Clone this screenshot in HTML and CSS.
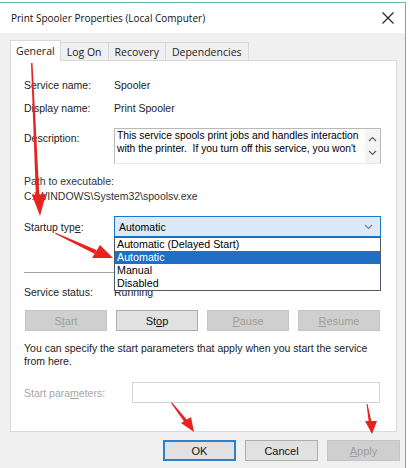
FILE: index.html
```html
<!DOCTYPE html>
<html lang="en">
<head>
<meta charset="UTF-8">
<meta name="viewport" content="width=device-width, initial-scale=1.0">
<title>Print Spooler Properties (Local Computer)</title>
<link rel="stylesheet" href="styles.css">
</head>
<body>
<div class="window">
    <div class="titlebar">
        <span class="title">Print Spooler Properties (Local Computer)</span>
        <svg class="close" width="12" height="12" viewBox="0 0 12 12">
            <path d="M0.5 0.5 L11.5 11.5 M11.5 0.5 L0.5 11.5" stroke="#222" stroke-width="1.1" fill="none"/>
        </svg>
    </div>
    <div class="main">
        <div class="tabs">
            <div class="tab active">General</div>
            <div class="tab">Log On</div>
            <div class="tab">Recovery</div>
            <div class="tab">Dependencies</div>
        </div>
        <div class="panel">
            <div class="row">
                <span class="label">Service name:</span>
                <span class="value">Spooler</span>
            </div>
            <div class="row display-row">
                <span class="label">Display name:</span>
                <span class="value">Print Spooler</span>
            </div>
            <div class="row desc-row">
                <span class="label desc-label">Description:</span>
                <div class="desc-box">
                    <div class="desc-text">This service spools print jobs and handles interaction with the printer.&nbsp; If you turn off this service, you won't be able to print or see your printers.</div>
                    <div class="scroll">
                        <svg width="9" height="6" viewBox="0 0 9 6"><path d="M1 5 L4.5 1.5 L8 5" stroke="#606060" stroke-width="1.2" fill="none"/></svg>
                        <svg width="9" height="6" viewBox="0 0 9 6"><path d="M1 1 L4.5 4.5 L8 1" stroke="#606060" stroke-width="1.2" fill="none"/></svg>
                    </div>
                </div>
            </div>
            <div class="path-label">Path to executable:</div>
            <div class="path-value">C:\WINDOWS\System32\spoolsv.exe</div>
            <div class="row startup-row">
                <span class="label">Startup typ<u>e</u>:</span>
                <div class="select">
                    <span>Automatic</span>
                    <svg width="9" height="6" viewBox="0 0 9 6"><path d="M1 1 L4.5 4.5 L8 1" stroke="#7a7a7a" stroke-width="1.1" fill="none"/></svg>
                    <ul class="options">
                        <li>Automatic (Delayed Start)</li>
                        <li class="selected">Automatic</li>
                        <li>Manual</li>
                        <li>Disabled</li>
                    </ul>
                </div>
            </div>
            <div class="separator"></div>
            <div class="row status-row">
                <span class="label">Service status:</span>
                <span class="value">Running</span>
            </div>
            <div class="service-buttons">
                <button class="btn" disabled>S<u>t</u>art</button>
                <button class="btn">St<u>o</u>p</button>
                <button class="btn" disabled><u>P</u>ause</button>
                <button class="btn" disabled><u>R</u>esume</button>
            </div>
            <p class="hint">You can specify the start parameters that apply when you start the service from here.</p>
            <div class="row params-row">
                <span class="label params-label">Start para<u>m</u>eters:</span>
                <div class="params-input"></div>
            </div>
        </div>
        <div class="actions">
            <button class="btn default">OK</button>
            <button class="btn">Cancel</button>
            <button class="btn" disabled><u>A</u>pply</button>
        </div>
    </div>
</div>

<!-- annotation arrows -->
<svg class="marks" width="410" height="468" viewBox="0 0 410 468">
    <g fill="#e8231f">
        <polygon points="31,63 32.5,63 39.5,199 36,199"/>
        <polygon points="32,195 46,194 40,216"/>
        <polygon points="55,232.5 55.6,234 95,254 96.5,250"/>
        <polygon points="92,258 100,245 113,258"/>
        <polygon points="171,403 172,402.5 188,421 185,423"/>
        <polygon points="181,423 191,417 194,432"/>
        <polygon points="366.5,404 367.5,404 372,424 369,424"/>
        <polygon points="365,421 377,421 372,434"/>
    </g>
</svg>
</body>
</html>
```

FILE: styles.css
```css
body {
    margin: 0;
    font-family: "Liberation Sans", Arial, sans-serif;
    font-size: 10.5px;
    color: #000;
    background: #fff;
}
.window {
    margin: 2px 4px 0 0;
    height: 466px;
    box-sizing: border-box;
    border-top: 1px solid #5fb6ad;
    border-right: 1px solid #5fb6ad;
    background: #f0f0f0;
}
.titlebar {
    height: 30px;
    background: #fff;
    display: flex;
    align-items: center;
    justify-content: space-between;
    padding: 0 11px;
}
.title {
    font-family: "Open Sans", sans-serif;
    font-size: 10px;
    color: #111;
}
.main {
    padding: 0 8px 0 10px;
}
.tabs {
    display: flex;
    align-items: flex-end;
    height: 27px;
    font-family: "Open Sans", sans-serif;
    font-size: 10.5px;
}
.tab {
    height: 18px;
    line-height: 18px;
    box-sizing: border-box;
    border: 1px solid #d9d9d9;
    border-bottom: none;
    border-left: none;
    padding: 0 6px;
    background: #f0f0f0;
    color: #222;
}
.tab.active {
    height: 21px;
    line-height: 20px;
    margin-bottom: -1px;
    padding: 0 5px;
    border-left: 1px solid #d9d9d9;
    background: #fff;
    position: relative;
    z-index: 1;
}
.panel {
    height: 372px;
    box-sizing: border-box;
    border: 1px solid #d9d9d9;
    background: #fff;
    padding: 16px 15px 0 13px;
}
.row {
    display: flex;
    align-items: center;
    min-height: 16px;
}
.label {
    width: 90px;
    flex: none;
    color: #222;
}
.value {
    color: #222;
}
.display-row {
    margin-top: 7px;
}
.desc-row {
    margin-top: 12px;
    align-items: flex-start;
}
.desc-label {
    padding-top: 4px;
}
.desc-box {
    flex: 1;
    height: 36px;
    box-sizing: border-box;
    border: 1px solid #b9b9b9;
    border-bottom-color: #e8e8e8;
    display: flex;
    overflow: hidden;
}
.desc-text {
    flex: 1;
    padding: 1px 2px;
    font-size: 10.3px;
    line-height: 12.5px;
    height: 25px;
    overflow: hidden;
}
.scroll {
    width: 15px;
    flex: none;
    background: #f4f4f4;
    display: flex;
    flex-direction: column;
    justify-content: space-around;
    align-items: center;
    padding: 3px 0;
}
.path-label {
    margin-top: 10px;
    line-height: 15px;
    color: #333;
}
.path-value {
    line-height: 15px;
    color: #333;
}
.startup-row {
    margin-top: 12px;
}
.select {
    flex: 1;
    height: 21px;
    box-sizing: border-box;
    border: 1px solid #1c76c9;
    background: #dceaf7;
    display: flex;
    align-items: center;
    justify-content: space-between;
    padding: 0 7px 0 4px;
    position: relative;
}
.options {
    position: absolute;
    top: 20px;
    left: -1px;
    right: -1px;
    margin: 0;
    padding: 0;
    list-style: none;
    background: #fff;
    border: 1px solid #4b5a6b;
    z-index: 2;
    font-size: 10.7px;
}
.options li {
    height: 13px;
    line-height: 13px;
    padding-left: 2px;
}
.options li.selected {
    background: #1f6fc5;
    color: #fff;
}
.separator {
    margin-top: 35px;
    height: 1px;
    background: #a0a0a0;
}
.status-row {
    margin-top: 11px;
}
.service-buttons {
    margin: 10px 1px 0 1px;
    display: grid;
    grid-template-columns: repeat(4, 1fr);
    gap: 9px;
}
.btn {
    height: 21px;
    box-sizing: border-box;
    border: 1px solid #adadad;
    background: #e1e1e1;
    font-family: "Liberation Sans", Arial, sans-serif;
    font-size: 11px;
    color: #111;
    padding: 0;
}
.btn:disabled {
    border-color: #c4c4c4;
    background: #cfcfcf;
    color: #9e9e9e;
}
.hint {
    margin: 11px 0 0 0;
    line-height: 13px;
    color: #222;
}
.params-row {
    margin-top: 14px;
}
.params-label {
    width: 108px;
    color: #a6a6a6;
}
.params-input {
    flex: 1;
    height: 21px;
    box-sizing: border-box;
    border: 1px solid #d4d4d4;
    margin-right: 1px;
}
.actions {
    display: flex;
    justify-content: flex-end;
    gap: 9px;
    margin: 8px -3px 0 0;
}
.actions .btn {
    width: 73px;
}
.btn.default {
    border: 2px solid #2f7fc8;
}
.marks {
    position: absolute;
    top: 0;
    left: 0;
    pointer-events: none;
}
```
